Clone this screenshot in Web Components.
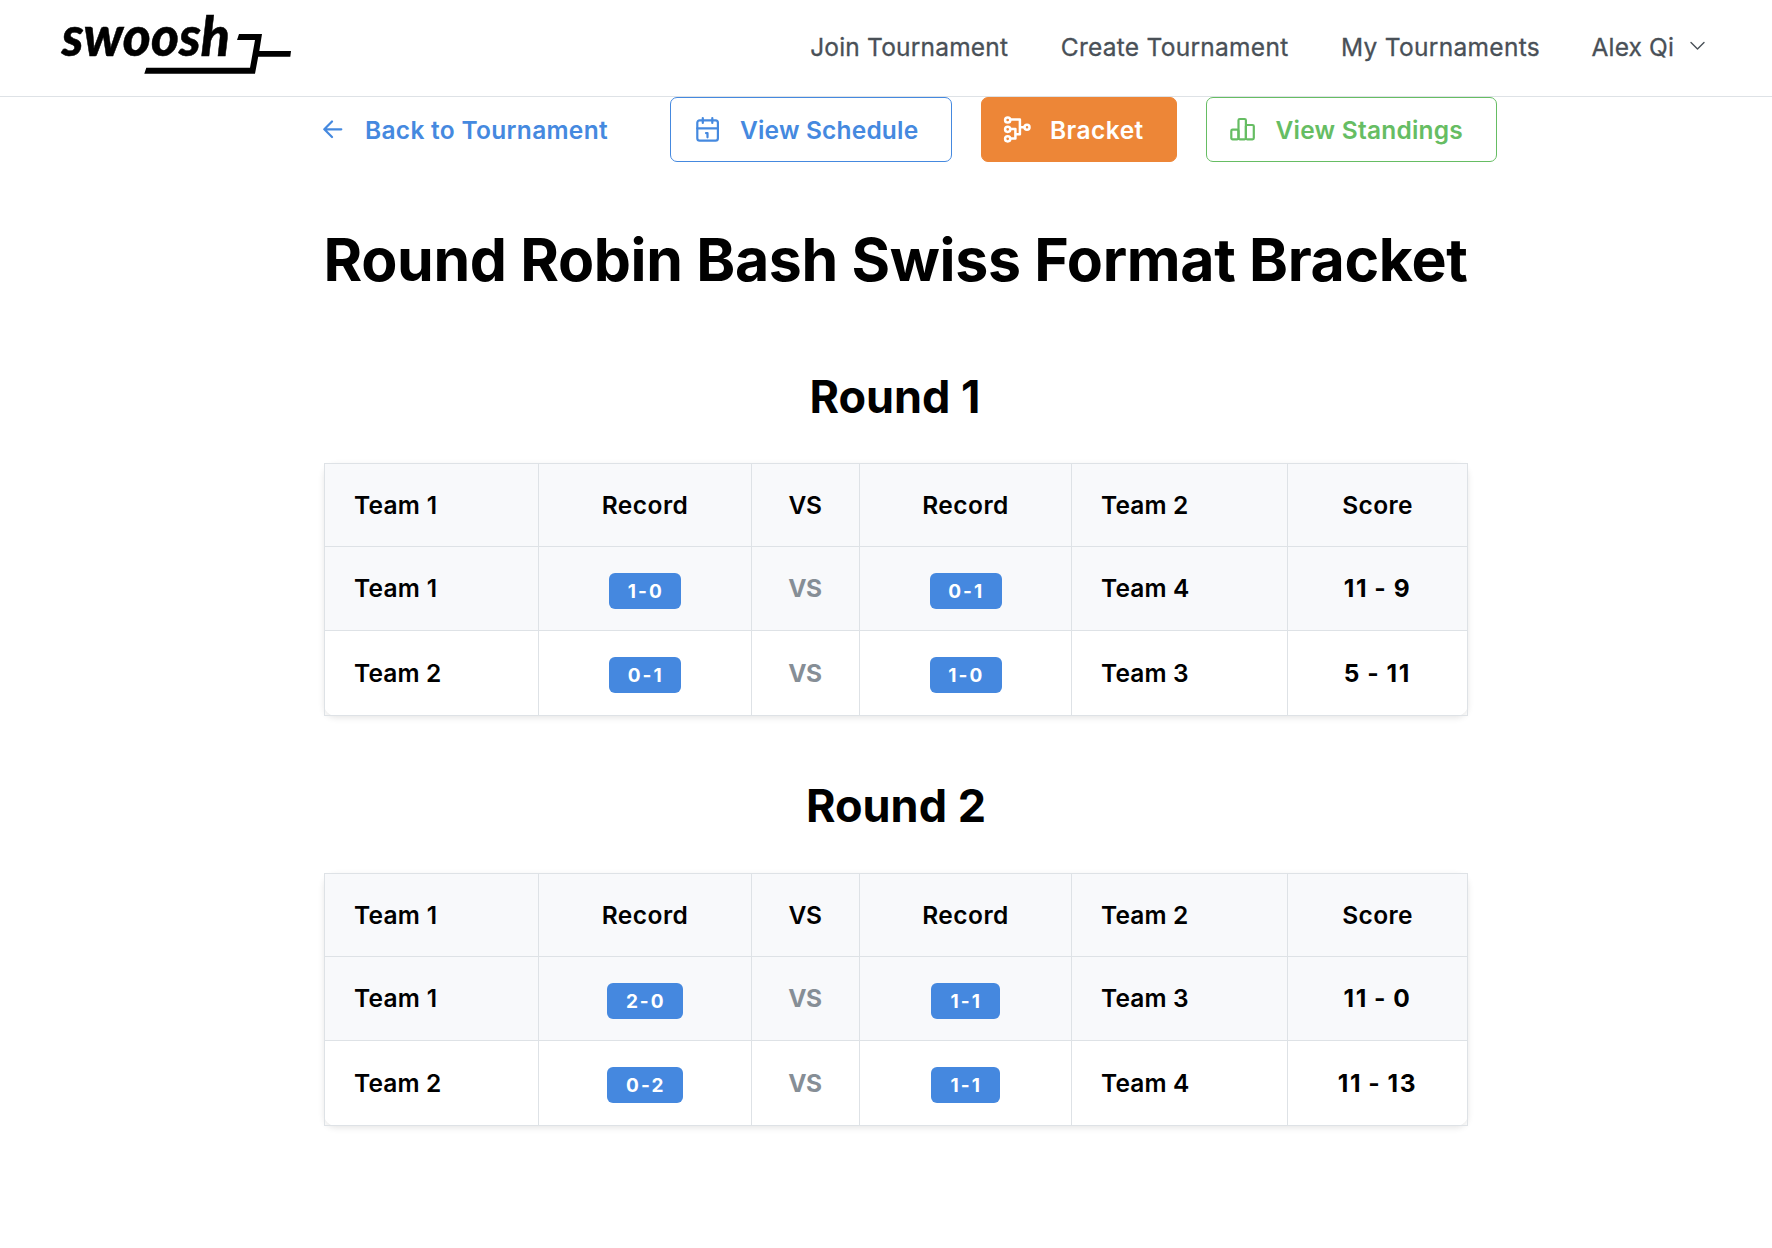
<!DOCTYPE html>
<html lang="en">
<head>
<meta charset="utf-8">
<title>Round Robin Bash</title>
<style>
body{margin:0;background:#fff;color:#000;font-family:Inter,"Liberation Sans",sans-serif;font-size:24.5px;min-height:1248px}
main{display:flex;flex-direction:column;width:1144px;margin-left:324px}
h1{margin:62px 0 0 -1px;font-size:59px;line-height:72px;font-weight:700;letter-spacing:-.35px;white-space:nowrap;text-align:center}
</style>
</head>
<body>
<app-header>
  <nav-link style="--ls:.19px">Join Tournament</nav-link>
  <nav-link style="--ls:.27px">Create Tournament</nav-link>
  <nav-link style="--ls:.3px">My Tournaments</nav-link>
  <nav-link style="--ls:.13px" menu>Alex Qi</nav-link>
</app-header>
<main>
  <tool-bar>
    <icon-button kind="back" style="--ls:.3px">Back to Tournament</icon-button>
    <icon-button kind="schedule" style="--ls:.18px">View Schedule</icon-button>
    <icon-button kind="bracket" style="--ls:.45px">Bracket</icon-button>
    <icon-button kind="standings" style="--ls:.23px">View Standings</icon-button>
  </tool-bar>
  <h1>Round Robin Bash Swiss Format Bracket</h1>
  <round-table heading="Round 1" rows="Team 1|1-0|0-1|Team 4|11 - 9;Team 2|0-1|1-0|Team 3|5 - 11" style="--above:74px;--below:39px;--nudge:2px"></round-table>
  <round-table heading="Round 2" rows="Team 1|2-0|1-1|Team 3|11 - 0;Team 2|0-2|1-1|Team 4|11 - 13" style="--above:63px;--below:40px;--nudge:0px"></round-table>
</main>
<script>
class BaseElement extends HTMLElement{
  constructor(){super();this.attachShadow({mode:'open'})}
  connectedCallback(){this.shadowRoot.innerHTML=this.render()}
}

customElements.define('swoosh-logo',class extends BaseElement{
  render(){return `<style>:host{display:block;width:300px;height:96px}svg{display:block;overflow:visible}
    text{font:italic 900 56px Lato,sans-serif;stroke:#000;stroke-width:.5px}</style>
    <svg width="300" height="96" viewBox="0 0 300 96">
      <text transform="translate(61.7 56) scale(.955 1)">swoosh</text>
      <path d="M239 34H262L259.3 51H291L290.3 56.8H258.2L255 73.7H144.3L146.3 67.7H250L255 40H237Z"/>
    </svg>`}
});

customElements.define('app-header',class extends BaseElement{
  render(){return `<style>:host{display:flex;justify-content:space-between;height:96px;border-bottom:1px solid #dee2e6}
    nav{display:flex;align-items:center;gap:52.6px;height:94px;padding-right:67.5px}</style>
    <swoosh-logo></swoosh-logo><nav><slot></slot></nav>`}
});

customElements.define('nav-link',class extends BaseElement{
  render(){return `<style>:host{display:flex;align-items:center;gap:15.5px;color:#495057;font-weight:400;letter-spacing:var(--ls);white-space:nowrap;-webkit-text-stroke:.3px #495057}
    :host([menu]){margin-left:-1px}
    svg{display:block;margin-top:-2px}</style><span><slot></slot></span>${this.hasAttribute('menu')
      ?'<svg width="15" height="10" viewBox="0 0 15 10" fill="none" stroke="#495057" stroke-width="1.4" stroke-linecap="round" stroke-linejoin="round"><path d="M1 1.5 7.5 8 14 1.5"/></svg>':''}`}
});

customElements.define('tool-bar',class extends BaseElement{
  render(){return `<style>:host{display:flex;gap:29px;height:65px;margin-left:-1px}</style><slot></slot>`}
});

const icons={
  back:'<svg width="20" height="27" viewBox="0 0 20 27"><path d="M18.3 13.3H1.3M9 5.5 1.3 13.3 9 21"/></svg>',
  schedule:'<svg width="28" height="27" viewBox="0 0 28 27"><rect x="3.3" y="4.3" width="20.6" height="20.4" rx="2.4"/><path d="M3.3 12.3H23.9M8.8 2V7M18.3 2V7M12 17.1H13.5V21.3"/></svg>',
  bracket:'<svg width="28" height="27" viewBox="0 0 28 27"><circle cx="4.7" cy="4" r="2.6"/><circle cx="4.7" cy="13.3" r="2.6"/><circle cx="4.7" cy="22.8" r="2.6"/><circle cx="24" cy="11.2" r="2.5"/><path d="M7.6 3.4H16.9V18.2H12.5M7.6 13.1H12.4V22.6H7.6M17 11.2H21.2"/></svg>',
  standings:'<svg width="28" height="27" viewBox="0 0 28 27"><rect x="2.3" y="13.6" width="7.2" height="9.7" rx="1.3"/><rect x="9.5" y="3" width="7.4" height="20.3" rx="1.3"/><rect x="16.9" y="9" width="7.9" height="14.3" rx="1.3"/></svg>'
};
customElements.define('icon-button',class extends BaseElement{
  render(){return `<style>
    :host{display:flex;flex:none;align-items:center;gap:19px;box-sizing:border-box;height:65px;border:1px solid currentColor;border-radius:7px;color:#4589df;font-weight:600;letter-spacing:var(--ls);white-space:nowrap}
    :host([kind=back]){border-color:transparent;border-width:1px 0;width:318px;gap:22px}
    :host([kind=schedule]){width:282px;padding-left:23px;gap:18px}
    :host([kind=bracket]){width:196px;padding-left:21px;background:#ed8637;border-color:#ed8637;color:#fff}
    :host([kind=standings]){width:291px;padding-left:22px;gap:18.5px;color:#66bd63}
    svg{display:block;fill:none;stroke:currentColor;stroke-width:2.2;stroke-linecap:round;stroke-linejoin:round;flex:none}
    :host([kind=bracket]) svg{stroke-width:2.5}
    span{padding-top:1px}</style>${icons[this.getAttribute('kind')]}<span><slot></slot></span>`}
});

customElements.define('record-badge',class extends BaseElement{
  render(){return `<style>
    :host{display:flex;align-items:center;justify-content:center;box-sizing:border-box;height:36px;margin-top:var(--drop,5px);border-radius:6px;background:#4588df;color:#fff;font-size:19px;font-weight:700;letter-spacing:2px;white-space:nowrap}
    span{margin-right:-1.5px;padding-top:var(--text-drop,0px)}</style><span><slot></slot></span>`}
});

const badgeWidth={'1-0':72,'0-1':72,'2-0':76,'0-2':76,'1-1':69};
customElements.define('round-table',class extends BaseElement{
  render(){
    const badge=v=>`<div class="c"><record-badge style="width:${badgeWidth[v]}px">${v}</record-badge></div>`;
    const team=v=>`<div class="team"><span style="letter-spacing:${v.endsWith('1')?.27:.15}px">${v}</span></div>`;
    const rows=this.getAttribute('rows').split(';').map((r,i)=>{
      const [a,ra,rb,b,s]=r.split('|');
      return `<div class="row r${i}">${team(a)}${badge(ra)}<div class="c vs">VS</div>${badge(rb)}${team(b)}<div class="c score">${s}</div></div>`}).join('');
    return `<style>
      :host{display:flex;flex-direction:column;padding-top:var(--above)}
      h2{margin:0 0 var(--below);padding-right:var(--nudge);font-size:45px;line-height:54px;font-weight:700;text-align:center}
      .panel{border-radius:12px;background:#fff;box-shadow:0 2px 6px rgba(0,0,0,.1)}
      .grid{border:solid #dee2e6;border-width:1px 0 0 1px}
      .row{display:grid;grid-template-columns:214px 213px 108px 212px 216px 180px}
      .row>div{display:flex;align-items:center;border:solid #dee2e6;border-width:0 1px 1px 0;font-weight:600;white-space:nowrap}
      .head,.r0{background:#f8f9fb}
      .head{height:83px}.r0{height:84px}.r1{height:85px;--drop:3px;--text-drop:2px}
      .r0>.team,.r0>.vs,.r0>.score{padding-bottom:1px}
      .row>.team{padding-left:29px}
      .c{justify-content:center}
      .row>.vs{color:#868e96;font-weight:700;letter-spacing:-.5px;padding-right:1px}
      .row>.score{font-weight:700;letter-spacing:1.7px;word-spacing:-1.4px}
    </style>
    <h2>${this.getAttribute('heading')}</h2>
    <div class="panel"><div class="grid">
      <div class="row head">${team('Team 1')}<div class="c" style="letter-spacing:.45px">Record</div><div class="c" style="letter-spacing:-.4px;padding-right:1px">VS</div><div class="c" style="letter-spacing:.45px">Record</div>${team('Team 2')}<div class="c" style="letter-spacing:.35px">Score</div></div>
      ${rows}
    </div></div>`}
});
</script>
</body>
</html>
